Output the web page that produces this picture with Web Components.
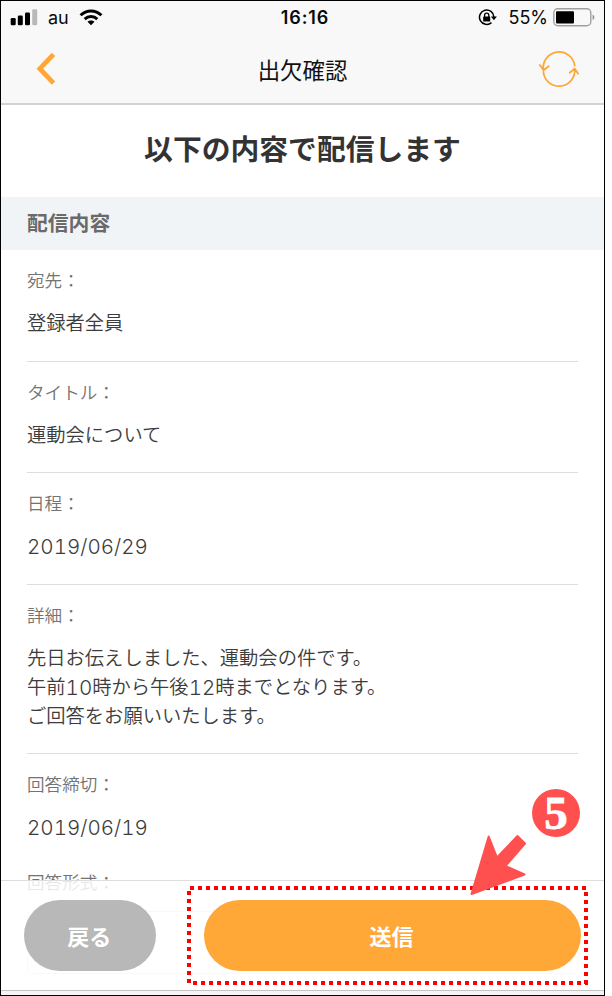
<!DOCTYPE html>
<html lang="ja">
<head>
<meta charset="utf-8">
<title>出欠確認</title>
<style>
body {
  margin: 0;
  background: #fff;
  font-family: Inter, "Noto Sans CJK JP", sans-serif;
}
</style>
</head>
<body>

<phone-screen>
  <status-bar slot="top" carrier="au" time="16:16" battery="55"></status-bar>
  <nav-bar slot="top">出欠確認</nav-bar>

  <page-title>以下の内容で配信します</page-title>
  <section-head>配信内容</section-head>
  <detail-item label="宛先：">登録者全員</detail-item>
  <detail-item label="タイトル：">運動会について</detail-item>
  <detail-item label="日程："><num-text>2019/06/29</num-text></detail-item>
  <detail-item label="詳細：">先日お伝えしました、運動会の件です。<br>午前<num-text>10</num-text>時から午後<num-text>12</num-text>時までとなります。<br>ご回答をお願いいたします。</detail-item>
  <detail-item label="回答締切：" last><num-text>2019/06/19</num-text></detail-item>
  <detail-select label="回答形式："></detail-select>

  <action-bar slot="bottom">
    <pill-button kind="back">戻る</pill-button>
    <pill-button kind="send">送信</pill-button>
  </action-bar>
  <step-marker slot="overlay">5</step-marker>
</phone-screen>

<script>
// attach an open shadow root and fill it
function render(el, html) {
  const template = document.createElement('template');
  template.innerHTML = html.trim();
  el.attachShadow({ mode: 'open' }).appendChild(template.content.cloneNode(true));
}

class PhoneScreen extends HTMLElement {
  constructor() {
    super();
    render(this, `
<style>
:host {
  display: flex;
  flex-direction: column;
  box-sizing: border-box;
  position: relative;
  width: 605px;
  height: 996px;
  border: 1px solid #000;
  overflow: hidden;
  background: #fff;
}
header {
  flex: none;
  box-sizing: border-box;
  height: 104px;
  background: #f8f8f8;
  border-bottom: 2px solid #d2d2d2;
}
main { flex: 1; min-height: 0; overflow: hidden; }
/* the bar floats over the scrolling content */
footer { position: absolute; left: 0; right: 0; bottom: 0; }
</style>
<header><slot name="top"></slot></header>
<main><slot></slot></main>
<footer><slot name="bottom"></slot></footer>
<slot name="overlay"></slot>`);
  }
}

class StatusBar extends HTMLElement {
  constructor() {
    super();
    render(this, `
<style>
:host {
  display: grid;
  grid-template-columns: 1fr auto 1fr;
  align-items: center;
  height: 33px;
  padding: 0 9px;
  color: #0a0a0a;
  font-size: 18px;
  line-height: 33px;
}
div { display: flex; align-items: center; }
svg { display: block; flex: none; }
.left { gap: 10px; }
.right { justify-content: flex-end; }
.time { font-weight: 600; padding-left: 5px; letter-spacing: .9px; }
.pct { margin: 0 5px 0 11px; }
</style>
<div class="left">
  <svg width="28" height="17" viewBox="0 0 28 17">
    <rect x=".7" y="9" width="5" height="7.2" rx="1.3"/>
    <rect x="7.8" y="6.6" width="5" height="9.6" rx="1.3"/>
    <rect x="15" y="3.4" width="5" height="12.8" rx="1.3"/>
    <rect x="22.2" y=".3" width="5" height="15.9" rx="1.3" fill="#b9b9b9"/>
  </svg>
  <span class="carrier"></span>
  <svg width="24" height="17" viewBox="0 0 24 17" fill="none" stroke="#000" stroke-width="3">
    <path d="M1.6 6.3C7.4 .6 16.6 .6 22.4 6.3"/>
    <path d="M5.7 10.2C9.3 6.7 14.7 6.7 18.3 10.2"/>
    <path d="M12 16.2L8.5 12.7C10.4 11 13.6 11 15.5 12.7Z" fill="#000" stroke="none"/>
  </svg>
</div>
<div class="time"></div>
<div class="right">
  <svg width="19" height="17" viewBox="0 0 19 17">
    <path d="M13.5 13.6A7.2 7.2 0 1 1 15.9 8" fill="none" stroke="#000" stroke-width="1.5"/>
    <path d="M12.9 7.5H18.9L15.9 11.2Z"/>
    <rect x="5.2" y="7.5" width="7" height="5" rx=".6"/>
    <path d="M6.6 8V6.2a2.1 2.1 0 0 1 4.2 0V8" fill="none" stroke="#000" stroke-width="1.3"/>
  </svg>
  <span class="pct"></span>
  <svg width="42" height="19" viewBox="0 0 42 19">
    <rect x=".8" y=".8" width="37" height="17" rx="4" fill="none" stroke="#a0a0a0" stroke-width="1.4"/>
    <rect x="3" y="3.2" width="18" height="12.2" rx="1"/>
    <path d="M39.6 6.5C42 7.5 42 11 39.6 12Z" fill="#909090"/>
  </svg>
</div>`);
  }

  connectedCallback() {
    const root = this.shadowRoot;
    root.querySelector('.carrier').textContent = this.getAttribute('carrier');
    root.querySelector('.time').textContent = this.getAttribute('time');
    root.querySelector('.pct').textContent = this.getAttribute('battery') + '%';
  }
}

class NavBar extends HTMLElement {
  constructor() {
    super();
    render(this, `
<style>
:host {
  display: grid;
  grid-template-columns: 44px 1fr 44px;
  align-items: center;
  height: 69px;
  padding: 0 23px;
  color: #111;
  font-size: 22.4px;
  text-align: center;
}
svg { display: block; fill: none; stroke: #ffa736; }
span { line-height: 67px; padding-top: 3px; }
</style>
<svg width="44" height="44" viewBox="0 0 44 44" stroke-width="4.8">
  <path d="M29.5 7.3L15.8 21.7L29.5 36.1"/>
</svg>
<span><slot></slot></span>
<svg width="44" height="44" viewBox="0 0 44 44" stroke-width="1.8" stroke-linecap="round" stroke-linejoin="round">
  <path d="M37.700 18.500A15.700 15.700 0 0 0 6.400 23M2.800 18L6.500 23.300L11.700 19.300"/>
  <path d="M6.400 25A15.700 15.700 0 0 0 37.700 22M32.700 25.700L37.600 21.600L41.100 26.800"/>
</svg>`);
  }
}

class PageTitle extends HTMLElement {
  constructor() {
    super();
    render(this, `
<style>
:host {
  display: block;
  height: 92px;
  color: #333;
  font-size: 28.8px;
  font-weight: 700;
  line-height: 89px;
  text-align: center;
}
</style>
<slot></slot>`);
  }
}

class SectionHead extends HTMLElement {
  constructor() {
    super();
    render(this, `
<style>
:host {
  display: block;
  height: 53px;
  padding-left: 26px;
  background: #f0f4f7;
  color: #6a6a6a;
  font-size: 20.8px;
  font-weight: 700;
  line-height: 54px;
}
</style>
<slot></slot>`);
  }
}

class DetailItem extends HTMLElement {
  constructor() {
    super();
    render(this, `
<style>
:host {
  display: flex;
  flex-direction: column;
  gap: 15px;
  margin: 0 26px;
  padding: 17px 0 22.5px;
  border-bottom: 1px solid #ddd;
  color: #3c3c3c;
  font-size: 19.3px;
  font-weight: 350;
  line-height: 29px;
}
:host([last]) { border-bottom: 0; padding-bottom: 10px; }
.label { color: #737373; font-size: 17.6px; line-height: 27px; }
</style>
<div class="label"></div>
<div><slot></slot></div>`);
  }

  connectedCallback() {
    this.shadowRoot.querySelector('.label').textContent = this.getAttribute('label');
  }
}

// figures are set wider than the kana and kanji round them
class NumText extends HTMLElement {
  constructor() {
    super();
    render(this, `
<style>
:host {
  display: inline;
  font-size: 20.6px;
  font-variant-numeric: tabular-nums;
  line-height: 1;
  vertical-align: -.6px;
}
</style><slot></slot>`);
  }
}

class DetailSelect extends HTMLElement {
  constructor() {
    super();
    render(this, `
<style>
:host { display: block; margin: 0 26px; padding-top: 17px; }
.label { color: #737373; font-size: 17.6px; font-weight: 350; line-height: 27px; }
.box { box-sizing: border-box; height: 63px; margin-top: 15px; border: 1px solid #ddd; border-radius: 5px; }
</style>
<div class="label"></div>
<div class="box"></div>`);
  }

  connectedCallback() {
    this.shadowRoot.querySelector('.label').textContent = this.getAttribute('label');
  }
}

class ActionBar extends HTMLElement {
  constructor() {
    super();
    render(this, `
<style>
:host { display: block; }
.bar {
  display: flex;
  gap: 47.5px;
  box-sizing: border-box;
  height: 110px;
  padding: 19px 23px 0 23.3px;
  border-top: 1px solid #ddd;
  background: rgba(255, 255, 255, .83);
}
.edge { box-sizing: border-box; height: 5px; border-top: 1px solid #c4c4c4; background: #f5f5f5; }
</style>
<div class="bar"><slot></slot></div>
<div class="edge"></div>`);
  }
}

class PillButton extends HTMLElement {
  constructor() {
    super();
    render(this, `
<style>
:host { display: block; flex: 1; height: 71px; }
:host([kind=back]) { flex: none; width: 132px; --fill: #b8b8b8; }
button {
  width: 100%;
  height: 100%;
  padding: 0 2px 1px 0;
  border: 0;
  border-radius: 36px;
  background: var(--fill, #ffa737);
  color: #fff;
  font: 700 22px "Noto Sans CJK JP", sans-serif;
}
</style>
<button type="button"><slot></slot></button>`);
  }
}

// dotted frame round the send button, with an arrow and a step number
class StepMarker extends HTMLElement {
  constructor() {
    super();
    render(this, `
<style>
:host { position: absolute; left: 185px; top: 784px; width: 406px; height: 204px; pointer-events: none; }
svg { display: block; }
.num {
  position: absolute;
  left: 346px;
  top: 4px;
  width: 48px;
  height: 48px;
  border-radius: 50%;
  background: #ff5050;
  color: #fff;
  font: 700 47px/49px "Liberation Serif", serif;
  -webkit-text-stroke: .8px #fff;
  text-align: center;
}
</style>
<svg width="406" height="204" viewBox="186 785 406 204">
  <g stroke="#f00" stroke-width="4" stroke-dasharray="4 4">
    <path d="M190 888H588"/>
    <path d="M189 891V984"/>
    <path d="M193 983H588"/>
    <path d="M586 892V985"/>
  </g>
  <path d="M471.5 894L488.7 836.5L497 857.5L517.5 836L525 843.5L505.5 866L524.5 874.5Z" fill="#ff5050" stroke="#ff5050" stroke-width="2" stroke-linejoin="round"/>
</svg>
<div class="num"><slot></slot></div>`);
  }
}

customElements.define('phone-screen', PhoneScreen);
customElements.define('status-bar', StatusBar);
customElements.define('nav-bar', NavBar);
customElements.define('page-title', PageTitle);
customElements.define('section-head', SectionHead);
customElements.define('detail-item', DetailItem);
customElements.define('num-text', NumText);
customElements.define('detail-select', DetailSelect);
customElements.define('action-bar', ActionBar);
customElements.define('pill-button', PillButton);
customElements.define('step-marker', StepMarker);
</script>
</body>
</html>
